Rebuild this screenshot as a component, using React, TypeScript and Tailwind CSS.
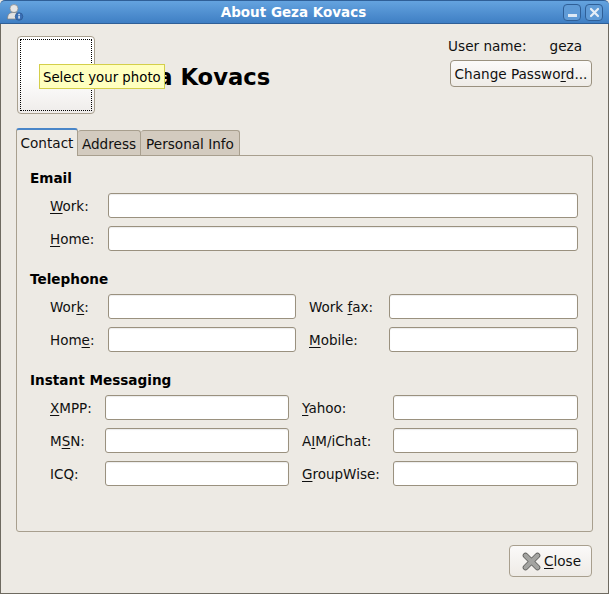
import React from "react";

function Field({ w }: { w: string }) {
  return <div className={`${w} h-[25px] shrink-0 bg-white border border-[#9a917f] rounded-[3px] shadow-[inset_0_1px_1px_rgba(0,0,0,0.08)]`} />;
}

function L({ a, u, b, w }: { a?: string; u?: string; b?: string; w: string }) {
  return (
    <span className={`${w} shrink-0 whitespace-pre text-[13.5px] leading-[26px] text-[#101010]`}>
      {a}
      {u ? <span className="underline underline-offset-2 decoration-1">{u}</span> : null}
      {b}
    </span>
  );
}

function Heading({ children, mt }: { children: string; mt: string }) {
  return <div className={`${mt} h-[20px] leading-[20px] text-[13.6px] font-bold text-black`}>{children}</div>;
}

function Row2({ l1, f1, l2, f2 }: { l1: React.ReactNode; f1: string; l2: React.ReactNode; f2: string }) {
  return (
    <div className="flex h-[25px]">
      {l1}
      <Field w={f1} />
      {l2}
      <Field w={f2} />
    </div>
  );
}

export default function App() {
  return (
    <div className="w-[609px] h-[594px] overflow-hidden flex flex-col bg-[#edeae4] relative text-[#101010]" style={{ fontFamily: '"DejaVu Sans", sans-serif' }}>
      {/* Title bar */}
      <div className="h-[24px] shrink-0 rounded-t-[5px] border-t border-b border-[#2f5f97] bg-gradient-to-b from-[#64a3df] to-[#3f7fc4] flex items-center relative">
        <svg className="ml-[6px] w-[18px] h-[18px]" viewBox="0 0 18 18">
          <circle cx="8" cy="5.5" r="4" fill="#e6e6e6" stroke="#8a8a8a" strokeWidth="0.7" />
          <path d="M1.5 16 C1.5 10.5 4 9.5 8 9.5 C12 9.5 14 11 14 16 Z" fill="#e2e2e2" stroke="#7d7d7d" strokeWidth="0.7" />
          <circle cx="13" cy="13.5" r="3.8" fill="#3a6fb5" stroke="#27508a" strokeWidth="0.6" />
          <rect x="12.4" y="12.6" width="1.3" height="3" fill="#fff" />
          <rect x="12.4" y="10.8" width="1.3" height="1.2" fill="#fff" />
        </svg>
        <div className="absolute left-0 w-[587px] text-center text-[13.5px] font-bold text-white leading-[22px]">About Geza Kovacs</div>
        <div className="ml-auto mr-[6px] flex gap-[4px] relative">
          <div className="w-[18px] h-[17px] rounded-[4px] border border-[#2f5f97] bg-[#5f9bd7] flex items-end justify-center pb-[3px]">
            <div className="w-[9px] h-[3px] bg-[#dde9f5]" />
          </div>
          <div className="w-[18px] h-[17px] rounded-[4px] border border-[#2f5f97] bg-[#5f9bd7] flex items-center justify-center">
            <svg width="11" height="11" viewBox="0 0 11 11"><path d="M2 2 L9 9 M9 2 L2 9" stroke="#e6eef7" strokeWidth="2.2" strokeLinecap="round" /></svg>
          </div>
        </div>
      </div>

      <div className="flex-1 flex flex-col border-x border-b border-[#6e6a60] pl-[15px] pr-[15px]">
        {/* Header */}
        <div className="h-[103px] shrink-0 relative flex pt-[12px]">
          <div className="w-[78px] h-[78px] ml-[1px] rounded-[4px] border border-[#a89f8e] bg-gradient-to-b from-white via-white to-[#efecea] p-[2px]">
            <div className="w-full h-full border border-dotted border-black" />
          </div>
          <div className="text-[22.7px] font-bold text-black leading-[30px] mt-[26px] ml-[15px] whitespace-nowrap">Geza Kovacs</div>
          <div className="ml-auto flex flex-col items-end pr-[1px]">
            <div className="flex text-[13.6px] leading-[20px]">
              <span>User name:</span>
              <span className="ml-[23px] mr-[10px]">geza</span>
            </div>
            <div className="mt-[4px] w-[142px] h-[27px] rounded-[4px] border border-[#9a917f] bg-gradient-to-b from-[#fbfaf9] to-[#efece7] text-[13.6px] leading-[26px] text-center whitespace-nowrap">
              Change Passwo<span className="underline underline-offset-2 decoration-1">r</span>d...
            </div>
          </div>
          {/* tooltip */}
          <div className="absolute left-[23px] top-[40px] w-[126px] h-[25px] bg-[#ffffbf] border border-[#d4cf4a] text-[13.3px] leading-[25px] pl-[3px] text-black whitespace-nowrap">
            Select your photo
          </div>
        </div>

        {/* Tabs */}
        <div className="h-[28px] shrink-0 flex items-end relative z-10">
          <div className="w-[62px] h-[28px] rounded-t-[3px] border-x border-[#a89f8e] border-t-2 border-t-[#4a86c8] bg-[#edeae4] text-[13.6px] leading-[26px] text-center mb-[-1px]">Contact</div>
          <div className="w-[63px] h-[25px] rounded-t-[3px] border-t border-r border-[#a89f8e] bg-[#d3cbbf] text-[13.6px] leading-[26px] text-center">Address</div>
          <div className="w-[99px] h-[25px] rounded-t-[3px] border-t border-r border-[#a89f8e] bg-[#d3cbbf] text-[13.6px] leading-[26px] text-center">Personal Info</div>
        </div>

        {/* Panel */}
        <div className="w-[577px] h-[377px] shrink-0 rounded-b-[3px] rounded-tr-[3px] border border-[#a89f8e] pl-[13px] pt-[12px]">
          <Heading mt="mt-0">Email</Heading>
          <div className="pl-[20px] mt-[5px] flex flex-col gap-[8px]">
            <div className="flex h-[25px]"><L u="W" b="ork:" w="w-[58px]" /><Field w="w-[470px]" /></div>
            <div className="flex h-[25px]"><L u="H" b="ome:" w="w-[58px]" /><Field w="w-[470px]" /></div>
          </div>

          <Heading mt="mt-[18px]">Telephone</Heading>
          <div className="pl-[20px] mt-[5px] flex flex-col gap-[8px]">
            <Row2 l1={<L a="Wor" u="k" b=":" w="w-[58px]" />} f1="w-[188px]" l2={<L a="Work " u="f" b="ax:" w="w-[93px] pl-[13px]" />} f2="w-[189px]" />
            <Row2 l1={<L a="Hom" u="e" b=":" w="w-[58px]" />} f1="w-[188px]" l2={<L u="M" b="obile:" w="w-[93px] pl-[13px]" />} f2="w-[189px]" />
          </div>

          <Heading mt="mt-[18px]">Instant Messaging</Heading>
          <div className="pl-[20px] mt-[5px] flex flex-col gap-[8px]">
            <Row2 l1={<L u="X" b="MPP:" w="w-[55px]" />} f1="w-[184px]" l2={<L u="Y" b="ahoo:" w="w-[104px] pl-[13px]" />} f2="w-[185px]" />
            <Row2 l1={<L a="M" u="S" b="N:" w="w-[55px]" />} f1="w-[184px]" l2={<L a="A" u="I" b="M/iChat:" w="w-[104px] pl-[13px]" />} f2="w-[185px]" />
            <Row2 l1={<L a="ICQ:" w="w-[55px]" />} f1="w-[184px]" l2={<L u="G" b="roupWise:" w="w-[104px] pl-[13px]" />} f2="w-[185px]" />
          </div>
        </div>

        {/* Footer */}
        <div className="flex justify-end mt-[13px] pr-[1px]">
          <div className="w-[83px] h-[32px] rounded-[4px] border border-[#a89f8e] bg-gradient-to-b from-[#fbfaf9] to-[#eeebe6] flex items-center pl-[12px] text-[13.6px]">
            <svg width="19" height="19" viewBox="0 0 19 19" className="mr-[3px]">
              <path d="M3.5 3.5 L15.5 15.5 M15.5 3.5 L3.5 15.5" stroke="#5f5f5c" strokeWidth="5.6" strokeLinecap="round" />
              <path d="M3.5 3.5 L15.5 15.5 M15.5 3.5 L3.5 15.5" stroke="#a3a3a0" strokeWidth="4" strokeLinecap="round" />
            </svg>
            <span className="whitespace-pre"><span className="underline underline-offset-2 decoration-1">C</span>lose</span>
          </div>
        </div>
      </div>
    </div>
  );
}
